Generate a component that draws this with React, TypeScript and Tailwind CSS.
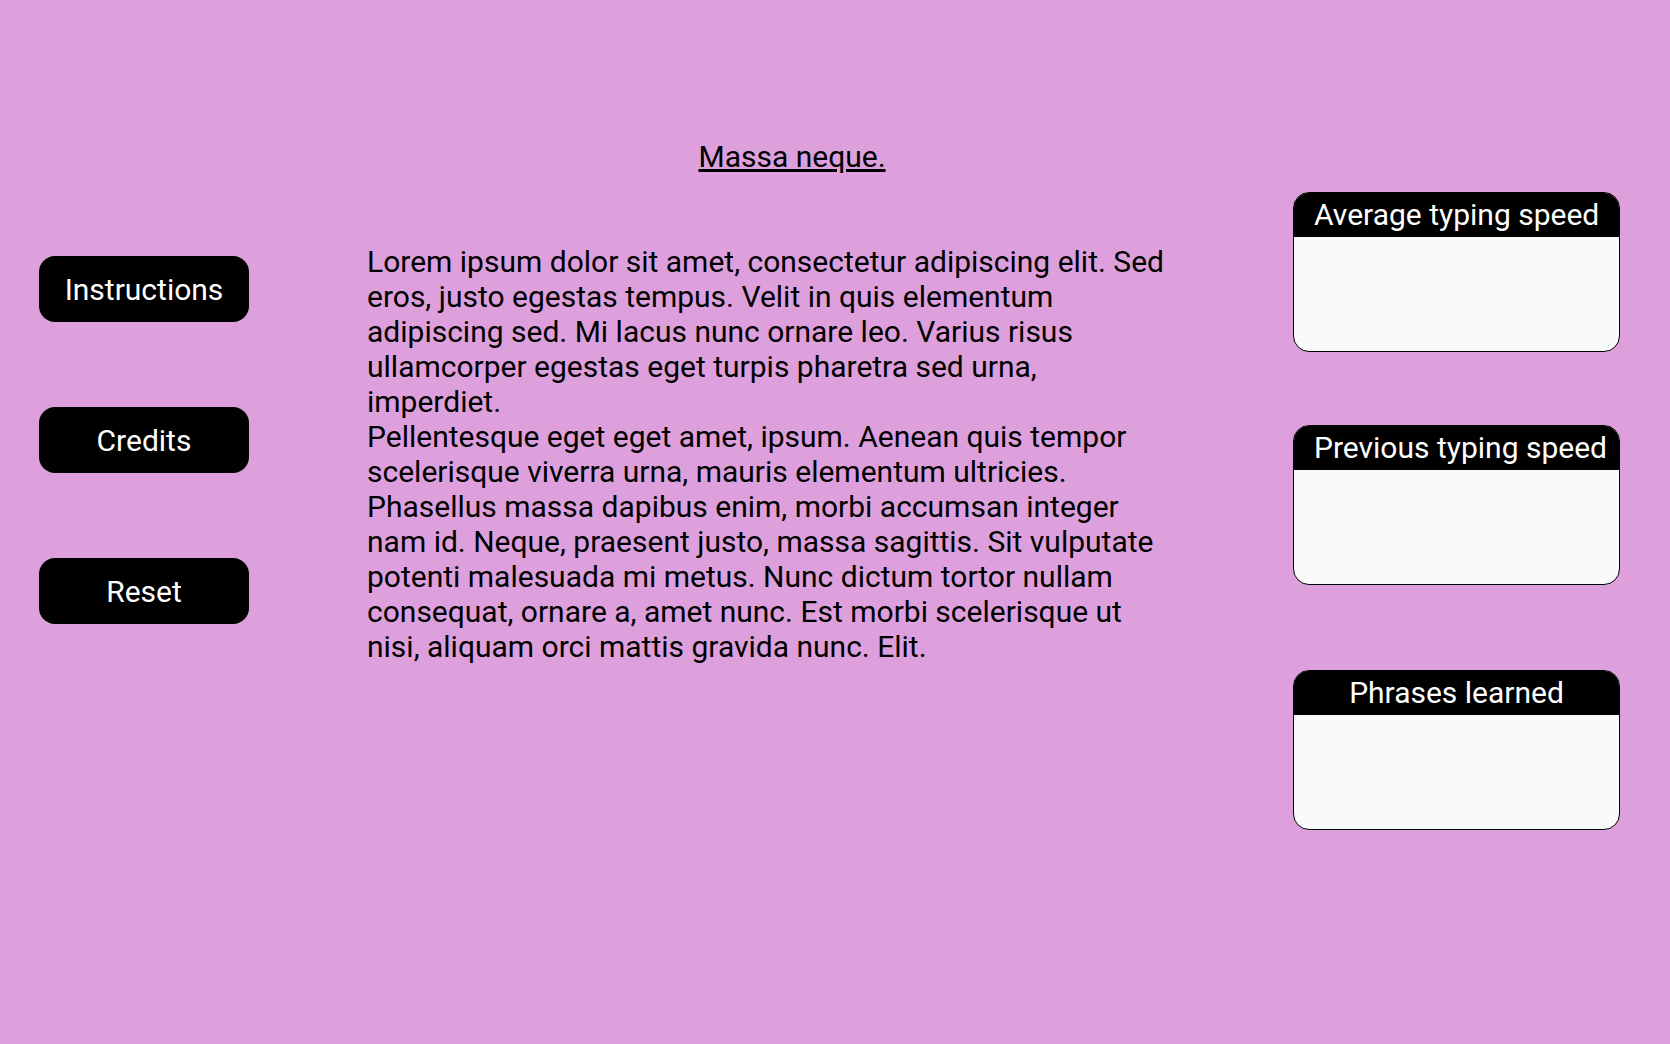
import React from "react";

const BUTTONS = ["Instructions", "Credits", "Reset"];

const STATS = [
  { label: "Average typing speed", gap: "" },
  { label: "Previous typing speed", gap: "mt-[73px]" },
  { label: "Phrases learned", gap: "mt-[85px]" },
];

const StatCard: React.FC<{ label: string; className?: string }> = ({ label, className }) => (
  <div className={`w-[327px] h-[160px] rounded-[16px] border border-black bg-[#fafafa] overflow-hidden flex flex-col ${className ?? ""}`}>
    <div className="h-[44px] bg-black text-white px-[20px] text-center whitespace-nowrap text-[30px] leading-[44px]">
      {label}
    </div>
    <div className="flex-1" />
  </div>
);

export default function App() {
  return (
    <div className="h-[1044px] bg-[#dda0dd] font-['Roboto','Noto_Sans',sans-serif] text-black flex">
      {/* menu */}
      <div className="pl-[39px] pt-[256px] flex flex-col gap-[85px]">
        {BUTTONS.map((b) => (
          <button
            key={b}
            className="w-[210px] h-[66px] rounded-[16px] bg-black text-white text-[30px] leading-[35px] flex items-center justify-center"
          >
            {b}
          </button>
        ))}
      </div>

      {/* phrase */}
      <div className="ml-[118px] w-[800px] pt-[139px]">
        <h1 className="pl-[50px] text-center text-[30px] leading-[35px] underline">Massa neque.</h1>
        <div className="mt-[70px] text-[30px] leading-[35px]">
          <p>
            Lorem ipsum dolor sit amet, consectetur adipiscing elit. Sed eros, justo egestas tempus. Velit in quis
            elementum adipiscing sed. Mi lacus nunc ornare leo. Varius risus ullamcorper egestas eget turpis pharetra
            sed urna, imperdiet.
          </p>
          <p>
            Pellentesque eget eget amet, ipsum. Aenean quis tempor scelerisque viverra urna, mauris elementum
            ultricies. Phasellus massa dapibus enim, morbi accumsan integer nam id. Neque, praesent justo, massa
            sagittis. Sit vulputate potenti malesuada mi metus. Nunc dictum tortor nullam consequat, ornare a, amet
            nunc. Est morbi scelerisque ut nisi, aliquam orci mattis gravida nunc. Elit.
          </p>
        </div>
      </div>

      {/* stats */}
      <div className="ml-auto mr-[50px] pt-[192px] flex flex-col">
        {STATS.map((s) => (
          <StatCard key={s.label} label={s.label} className={s.gap} />
        ))}
      </div>
    </div>
  );
}
